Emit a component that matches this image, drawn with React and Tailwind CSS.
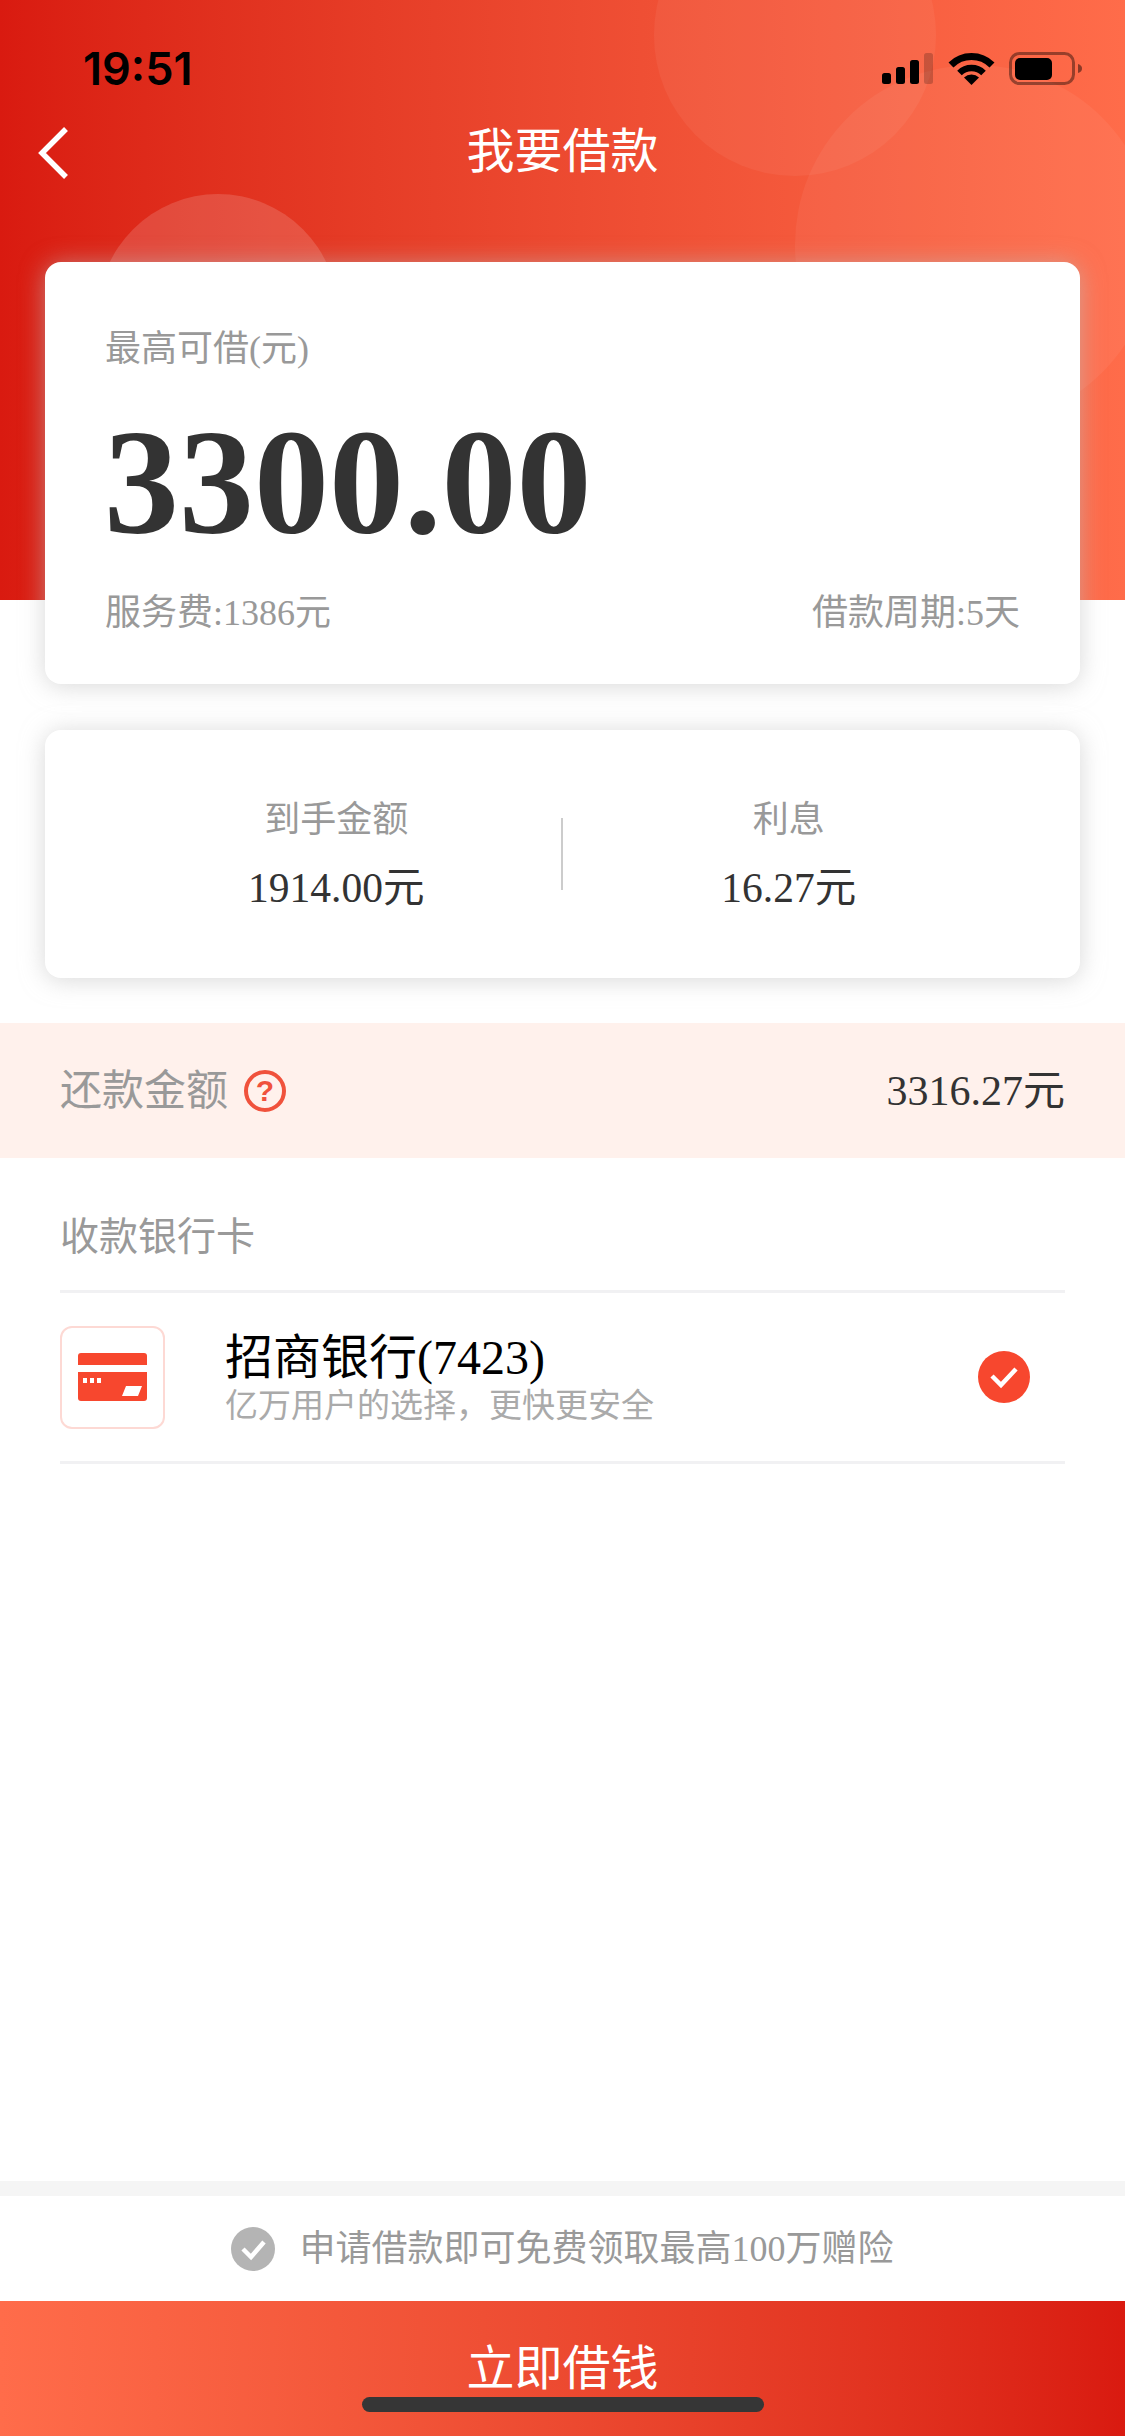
const SERIF_CJK = '[font-family:"Liberation_Serif","Noto_Sans_CJK_SC",serif]';

function StatusIcons() {
  return (
    <svg width="200" height="40" viewBox="0 0 200 40" className="block">
      <rect x="0" y="21" width="9" height="11" rx="2.5" fill="#000" />
      <rect x="14" y="15" width="9" height="17" rx="2.5" fill="#000" />
      <rect x="28" y="8" width="9" height="24" rx="2.5" fill="#000" />
      <rect x="42" y="1" width="9" height="31" rx="2.5" fill="#000" fillOpacity="0.2" />
      <path d="M69 13A29 29 0 0 1 110 13" fill="none" stroke="#000" strokeWidth="7" />
      <path d="M77.500 21A17 17 0 0 1 101.500 21" fill="none" stroke="#000" strokeWidth="6.500" />
      <path d="M89.500 33 82 25.500A11 11 0 0 1 97 25.500z" fill="#000" />
      <rect x="128.500" y="1.500" width="63" height="30" rx="9" fill="none" stroke="#000" strokeOpacity="0.4" strokeWidth="3" />
      <rect x="133" y="6" width="37" height="22" rx="5" fill="#000" />
      <path d="M196 12c3 1 4 2.500 4 4.500s-1 3.500-4 4.500z" fill="#000" fillOpacity="0.45" />
    </svg>
  );
}

function Header() {
  return (
    <div className="relative h-[600px] shrink-0 overflow-hidden bg-gradient-to-r from-[#d91a10] to-[#ff6c4a]">
      <div className="absolute left-[654px] top-[-106px] h-[282px] w-[282px] rounded-full bg-white/5" />
      <div className="absolute left-[795px] top-[65px] h-[360px] w-[360px] rounded-full bg-white/5" />
      <div className="absolute left-[98px] top-[194px] h-[240px] w-[240px] rounded-full bg-white/15" />
      <div className="relative flex h-[104px] items-end justify-between pl-[83px] pr-[43px]">
        <span className="pb-[10px] text-[45px] font-semibold leading-[50px] text-black [font-family:Inter,sans-serif]">19:51</span>
        <div className="pb-[12px]">
          <StatusIcons />
        </div>
      </div>
      <div className="relative flex h-[96px] items-center justify-center">
        <svg width="40" height="60" viewBox="0 0 40 60" className="absolute left-[33px] top-[19px]">
          <path d="M33 6 9 30l24 24" fill="none" stroke="#fff" strokeWidth="5.500" />
        </svg>
        <span className={`text-[48px] leading-[60px] text-white ${SERIF_CJK}`}>我要借款</span>
      </div>
    </div>
  );
}

function TopCard() {
  return (
    <div className="mx-[45px] h-[422px] rounded-[16px] bg-white px-[60px] pt-[62px] shadow-[0_2px_24px_rgba(190,190,190,0.6)]">
      <div className={`text-[36px] leading-[50px] text-[#999] ${SERIF_CJK}`}>最高可借(元)</div>
      <div className="mt-[33px] -ml-[1px] text-[150px] font-bold leading-[150px] text-[#333] [font-family:'Liberation_Serif',serif]">3300.00</div>
      <div className={`mt-[31px] flex justify-between text-[36px] leading-[50px] text-[#999] ${SERIF_CJK}`}>
        <span>服务费:1386元</span>
        <span>借款周期:5天</span>
      </div>
    </div>
  );
}

function Stat({ label, value }) {
  return (
    <div className={`flex flex-col items-center ${SERIF_CJK}`}>
      <span className="text-[36px] leading-[50px] text-[#999]">{label}</span>
      <span className="mt-[18px] text-[41.500px] leading-[50px] text-[#333]">{value}</span>
    </div>
  );
}

function AmountCard() {
  return (
    <div className="relative mx-[45px] mt-[46px] grid h-[248px] grid-cols-2 items-center rounded-[16px] bg-white px-[65px] shadow-[0_2px_24px_rgba(190,190,190,0.6)]">
      <Stat label="到手金额" value="1914.00元" />
      <Stat label="利息" value="16.27元" />
      <div className="absolute left-[516px] top-[88px] h-[72px] w-[2px] bg-[#ccc]" />
    </div>
  );
}

function RepayBand() {
  return (
    <div className={`mt-[45px] flex h-[135px] items-center justify-between bg-[#fff1ec] px-[60px] ${SERIF_CJK}`}>
      <div className="flex items-center gap-[16px]">
        <span className="text-[42px] leading-[50px] text-[#999]">还款金额</span>
        <span className="flex h-[42px] w-[42px] items-center justify-center rounded-full border-[4px] border-[#f0523c] text-[30px] font-bold leading-none text-[#f0523c] [font-family:'Liberation_Sans',sans-serif]">?</span>
      </div>
      <span className="text-[42px] leading-[50px] text-[#333]">3316.27元</span>
    </div>
  );
}

function BankRow() {
  return (
    <div className={`mx-[60px] ${SERIF_CJK}`}>
      <div className="flex h-[132px] items-center pt-[26px] text-[39px] leading-[50px] text-[#999]">收款银行卡</div>
      <div className="flex h-[174px] items-center border-y-[3px] border-[#f1f1f3]">
        <div className="flex h-[103px] w-[105px] items-center justify-center rounded-[12px] border-2 border-[#fdd9d4]">
          <svg width="69" height="48" viewBox="0 0 69 48">
            <path d="M0 12V3a3 3 0 0 1 3-3h63a3 3 0 0 1 3 3v9z" fill="#f7472e" />
            <path d="M0 19h69v26a3 3 0 0 1-3 3H3a3 3 0 0 1-3-3z" fill="#f7472e" />
            <rect x="5" y="25" width="4" height="5" fill="#fff" />
            <rect x="12" y="25" width="4" height="5" fill="#fff" />
            <rect x="19" y="25" width="4" height="5" fill="#fff" />
            <path d="M48 33h16l-4 10H44z" fill="#fff" />
          </svg>
        </div>
        <div className="ml-[60px] flex flex-1 flex-col">
          <span className="text-[48px] leading-[54px] text-black">招商银行(7423)</span>
          <span className="mt-[3px] text-[33px] leading-[36px] text-[#aaa]">亿万用户的选择，更快更安全</span>
        </div>
        <svg width="52" height="52" viewBox="0 0 52 52" className="mr-[35px]">
          <circle cx="26" cy="26" r="26" fill="#f7472e" />
          <path d="M14 25l9 9 15-16" fill="none" stroke="#fff" strokeWidth="4.500" />
        </svg>
      </div>
    </div>
  );
}

function Footer() {
  return (
    <div className="mt-auto shrink-0">
      <div className="h-[15px] bg-[#f5f5f5]" />
      <div className={`flex h-[105px] items-center justify-center gap-[24px] bg-white ${SERIF_CJK}`}>
        <svg width="44" height="44" viewBox="0 0 44 44">
          <circle cx="22" cy="22" r="22" fill="#b4b4b4" />
          <path d="M12 22l8 8 13-15" fill="none" stroke="#fff" strokeWidth="4.500" />
        </svg>
        <span className="text-[36px] leading-[50px] text-[#999]">申请借款即可免费领取最高100万赠险</span>
      </div>
      <div className="relative flex h-[135px] justify-center bg-gradient-to-r from-[#ff6c4a] to-[#d91a10] pt-[38px]">
        <span className={`text-[48px] leading-[60px] text-white ${SERIF_CJK}`}>立即借钱</span>
        <div className="absolute bottom-[24px] left-[362px] h-[15px] w-[402px] rounded-full bg-[#363636]" />
      </div>
    </div>
  );
}

export default function App() {
  return (
    <div className="flex h-[2436px] w-[1125px] flex-col overflow-hidden bg-white">
      <Header />
      <div className="relative -mt-[338px]">
        <TopCard />
        <AmountCard />
        <RepayBand />
        <BankRow />
      </div>
      <Footer />
    </div>
  );
}
